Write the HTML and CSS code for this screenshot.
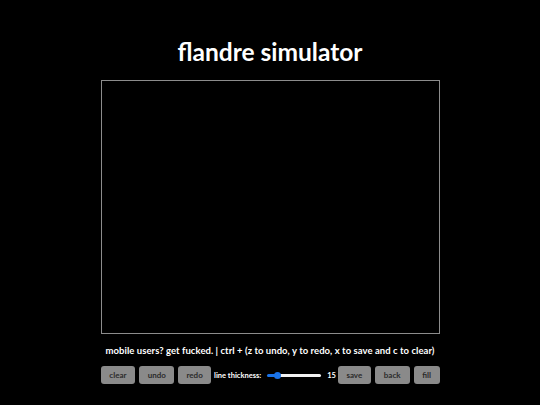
FILE: index.html
```html
<html>

<head>
    <title>flandre simulator</title>
    <link rel="stylesheet" href="styles.css">
</head>

<body>
    <div id="app">
        <h1>flandre simulator</h1>
        <canvas id="board" width="337" height="252"></canvas>
        <p id="hint">mobile users? get fucked. | ctrl + (z to undo, y to redo, x to save and c to clear)</p>
        <div id="tools">
            <button>clear</button>
            <button>undo</button>
            <button class="midbtn">redo</button>
            <label for="thickness">line thickness:</label>
            <input type="range" id="thickness" min="1" max="100" value="15">
            <span id="thicknessval">15</span>
            <button class="midbtn">save</button>
            <button>back</button>
            <button class="smallbtn">fill</button>
        </div>
    </div>
</body>

</html>
```

FILE: styles.css
```css
* {
    margin: 0;
    padding: 0;
}

body {
    background-color: black;
    color: white;
    font-family: 'Lato', sans-serif;
}

#app {
    width: 339px;
    margin: auto;
    display: flex;
    flex-direction: column;
    align-items: center;
}

#app h1 {
    font-size: 24.5px;
    font-weight: bold;
    margin-top: 37px;
    margin-bottom: 14px;
}

#board {
    display: block;
    border: 1px solid #8c8c8c;
    background-color: black;
}

#hint {
    font-size: 9.5px;
    font-weight: bold;
    margin-top: 11px;
    white-space: nowrap;
    letter-spacing: 0.05px;
}

#tools {
    width: 339px;
    display: flex;
    align-items: center;
    gap: 4px;
    margin-top: 10px;
}

#tools button {
    height: 18px;
    width: 35px;
    background-color: #8a8a8a;
    border: none;
    border-radius: 3px;
    color: #2a2a2a;
    font-family: 'Lato', sans-serif;
    font-size: 8px;
    font-weight: bold;
}

#tools .midbtn {
    width: 33px;
}

#tools .smallbtn {
    width: 26px;
    margin-left: auto;
}

#tools label {
    font-size: 7.5px;
    font-weight: bold;
    white-space: nowrap;
    margin-left: -1px;
}

/* thin white track, blue up to the thumb (value 15) */
#thickness {
    -webkit-appearance: none;
    width: 54px;
    height: 3px;
    margin-left: 2px;
    border-radius: 2px;
    background: linear-gradient(to right, #1a73e8 0 17%, #f2f2f2 17% 100%);
}

#thickness::-webkit-slider-thumb {
    -webkit-appearance: none;
    width: 7px;
    height: 7px;
    border-radius: 50%;
    background-color: #1a73e8;
}

#thicknessval {
    font-size: 7.5px;
    font-weight: bold;
    margin-left: 2px;
    margin-right: -2px;
}
```
